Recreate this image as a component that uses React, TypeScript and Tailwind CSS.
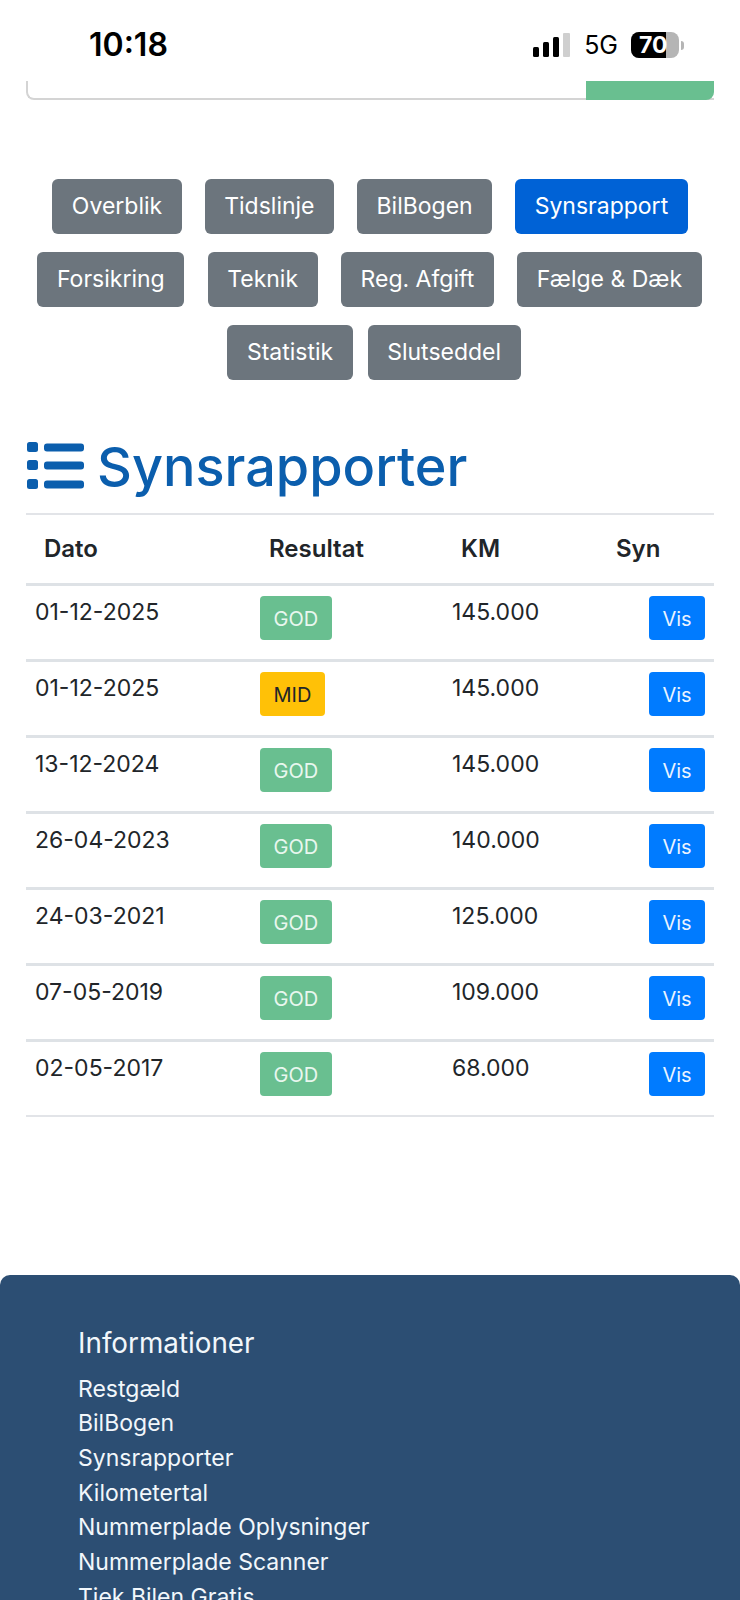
const font = { fontFamily: "Inter, 'Liberation Sans', sans-serif" };

const rowsTop = [
  ["Overblik", "Tidslinje", "BilBogen", "Synsrapport"],
  ["Forsikring", "Teknik", "Reg. Afgift", "Fælge & Dæk"],
  ["Statistik", "Slutseddel"],
];

const reports = [
  { dato: "01-12-2025", res: "GOD", km: "145.000" },
  { dato: "01-12-2025", res: "MID", km: "145.000" },
  { dato: "13-12-2024", res: "GOD", km: "145.000" },
  { dato: "26-04-2023", res: "GOD", km: "140.000" },
  { dato: "24-03-2021", res: "GOD", km: "125.000" },
  { dato: "07-05-2019", res: "GOD", km: "109.000" },
  { dato: "02-05-2017", res: "GOD", km: "68.000" },
];

const links = [
  "Restgæld",
  "BilBogen",
  "Synsrapporter",
  "Kilometertal",
  "Nummerplade Oplysninger",
  "Nummerplade Scanner",
  "Tjek Bilen Gratis",
];

function StatusBar() {
  return (
    <div className="h-[81px] flex items-start justify-between pl-[89px] pr-[56px] pt-[26px] bg-white">
      <div className="text-[32px] leading-[38px] font-semibold text-black">10:18</div>
      <div className="flex items-center pt-[6px]">
        <svg width="38" height="24" viewBox="0 0 38 24">
          <rect x="0" y="14" width="6" height="10" rx="1.5" fill="#000" />
          <rect x="10" y="9" width="6" height="15" rx="1.5" fill="#000" />
          <rect x="20" y="4" width="6" height="20" rx="1.5" fill="#000" />
          <rect x="30" y="0" width="7" height="24" rx="1" fill="#cfcfcf" />
        </svg>
        <span className="ml-[13px] text-[25px] leading-[26px] font-normal text-black">5G</span>
        <div className="ml-[13px] w-[48px] h-[26px] rounded-[8px] overflow-hidden flex bg-[#b5b5b5] relative">
          <div className="w-[35px] bg-black" />
          <span className="absolute left-[8px] top-0 text-[23px] leading-[26px] font-bold text-white">70</span>
        </div>
        <div className="ml-[2px] w-[3px] h-[9px] rounded-r-full bg-[#b5b5b5]" />
      </div>
    </div>
  );
}

export default function App() {
  return (
    <div className="w-[740px] h-[1600px] overflow-hidden bg-white" style={font}>
      <StatusBar />

      <div className="mx-[26px] h-[19px] flex justify-end border-l-2 border-b-2 border-[#d4d4d4] rounded-bl-[8px]">
        <div className="w-[128px] h-[19px] bg-[#69bf90] rounded-br-[8px]" />
      </div>

      <div className="mt-[79px] flex flex-col gap-[18px] items-center">
        <div className="flex gap-[23px]">
          {rowsTop[0].map((label) => (
            <NavButton key={label} label={label} />
          ))}
        </div>
        <div className="flex gap-[23.5px] pr-[1px]">
          {rowsTop[1].map((label) => (
            <NavButton key={label} label={label} />
          ))}
        </div>
        <div className="flex gap-[15px] pl-[8px]">
          {rowsTop[2].map((label) => (
            <NavButton key={label} label={label} />
          ))}
        </div>
      </div>

      <div className="mx-[26px] mt-[61px] flex items-center gap-[11px] h-[50px]">
        <svg width="59" height="48" viewBox="0 0 59 48" className="ml-[1px]">
          <rect x="0" y="0" width="11" height="10" rx="2.5" fill="#0b5ead" />
          <rect x="0" y="18" width="11" height="10" rx="2.5" fill="#0b5ead" />
          <rect x="0" y="37" width="11" height="10" rx="2.5" fill="#0b5ead" />
          <rect x="17" y="1.5" width="40" height="8" rx="3" fill="#0b5ead" />
          <rect x="17" y="19.5" width="40" height="8" rx="3" fill="#0b5ead" />
          <rect x="17" y="38.5" width="40" height="8" rx="3" fill="#0b5ead" />
        </svg>
        <h1 className="pt-[2px] text-[54px] leading-[50px] font-medium text-[#0b5ead]">Synsrapporter</h1>
      </div>

      <table className="mt-[22px] ml-[26px] w-[688px] table-fixed border-t-2 border-b-2 border-[#e2e4e8] text-[23px] text-[#212529]">
        <colgroup>
          <col className="w-[225px]" />
          <col className="w-[192px]" />
          <col className="w-[155px]" />
          <col className="w-[116px]" />
        </colgroup>
        <thead>
          <tr className="h-[70px] text-left text-[24px]">
            <th className="pl-[18px] font-semibold">Dato</th>
            <th className="pl-[18px] font-semibold">Resultat</th>
            <th className="pl-[18px] font-semibold">KM</th>
            <th className="pl-[18px] font-semibold">Syn</th>
          </tr>
        </thead>
        <tbody>
          {reports.map((r, i) => (
            <tr key={i} className="border-t-[3px] border-[#dee2e6] align-top">
              <td className="pl-[9px] pt-[10px] pb-[19px] leading-[32px]">{r.dato}</td>
              <td className="pl-[9px] pt-[10px] pb-[19px]">
                <span
                  className={
                    "inline-flex h-[44px] items-center pt-[2px] px-[13.5px] rounded-[4px] text-[20px] " +
                    (r.res === "GOD" ? "bg-[#69bf90] text-[#e9f7ef]" : "bg-[#ffc107] text-[#212529]")
                  }
                >
                  {r.res}
                </span>
              </td>
              <td className="pl-[9px] pt-[10px] pb-[19px] leading-[32px]">{r.km}</td>
              <td className="pr-[9px] pt-[10px] pb-[19px] text-right">
                <span className="inline-flex h-[44px] w-[56px] items-center justify-center pt-[2px] rounded-[4px] bg-[#007bff] text-[20px] text-[#eaf3ff]">
                  Vis
                </span>
              </td>
            </tr>
          ))}
        </tbody>
      </table>

      <footer className="mt-[158px] h-[400px] rounded-t-[10px] bg-[#2c4e73] pl-[78px] pt-[50px] text-[#f2f7fb]">
        <h2 className="text-[27.8px] leading-[36px] font-normal">Informationer</h2>
        <ul className="mt-[11px] text-[23px] leading-[34.7px]">
          {links.map((l) => (
            <li key={l}>{l}</li>
          ))}
        </ul>
      </footer>
    </div>
  );
}

function NavButton({ label }: { label: string }) {
  return (
    <div
      className={
        "h-[55px] px-[19.5px] flex items-center rounded-[6px] text-[23px] text-white " +
        (label === "Synsrapport" ? "bg-[#0062d6]" : "bg-[#6c757d]")
      }
    >
      {label}
    </div>
  );
}
